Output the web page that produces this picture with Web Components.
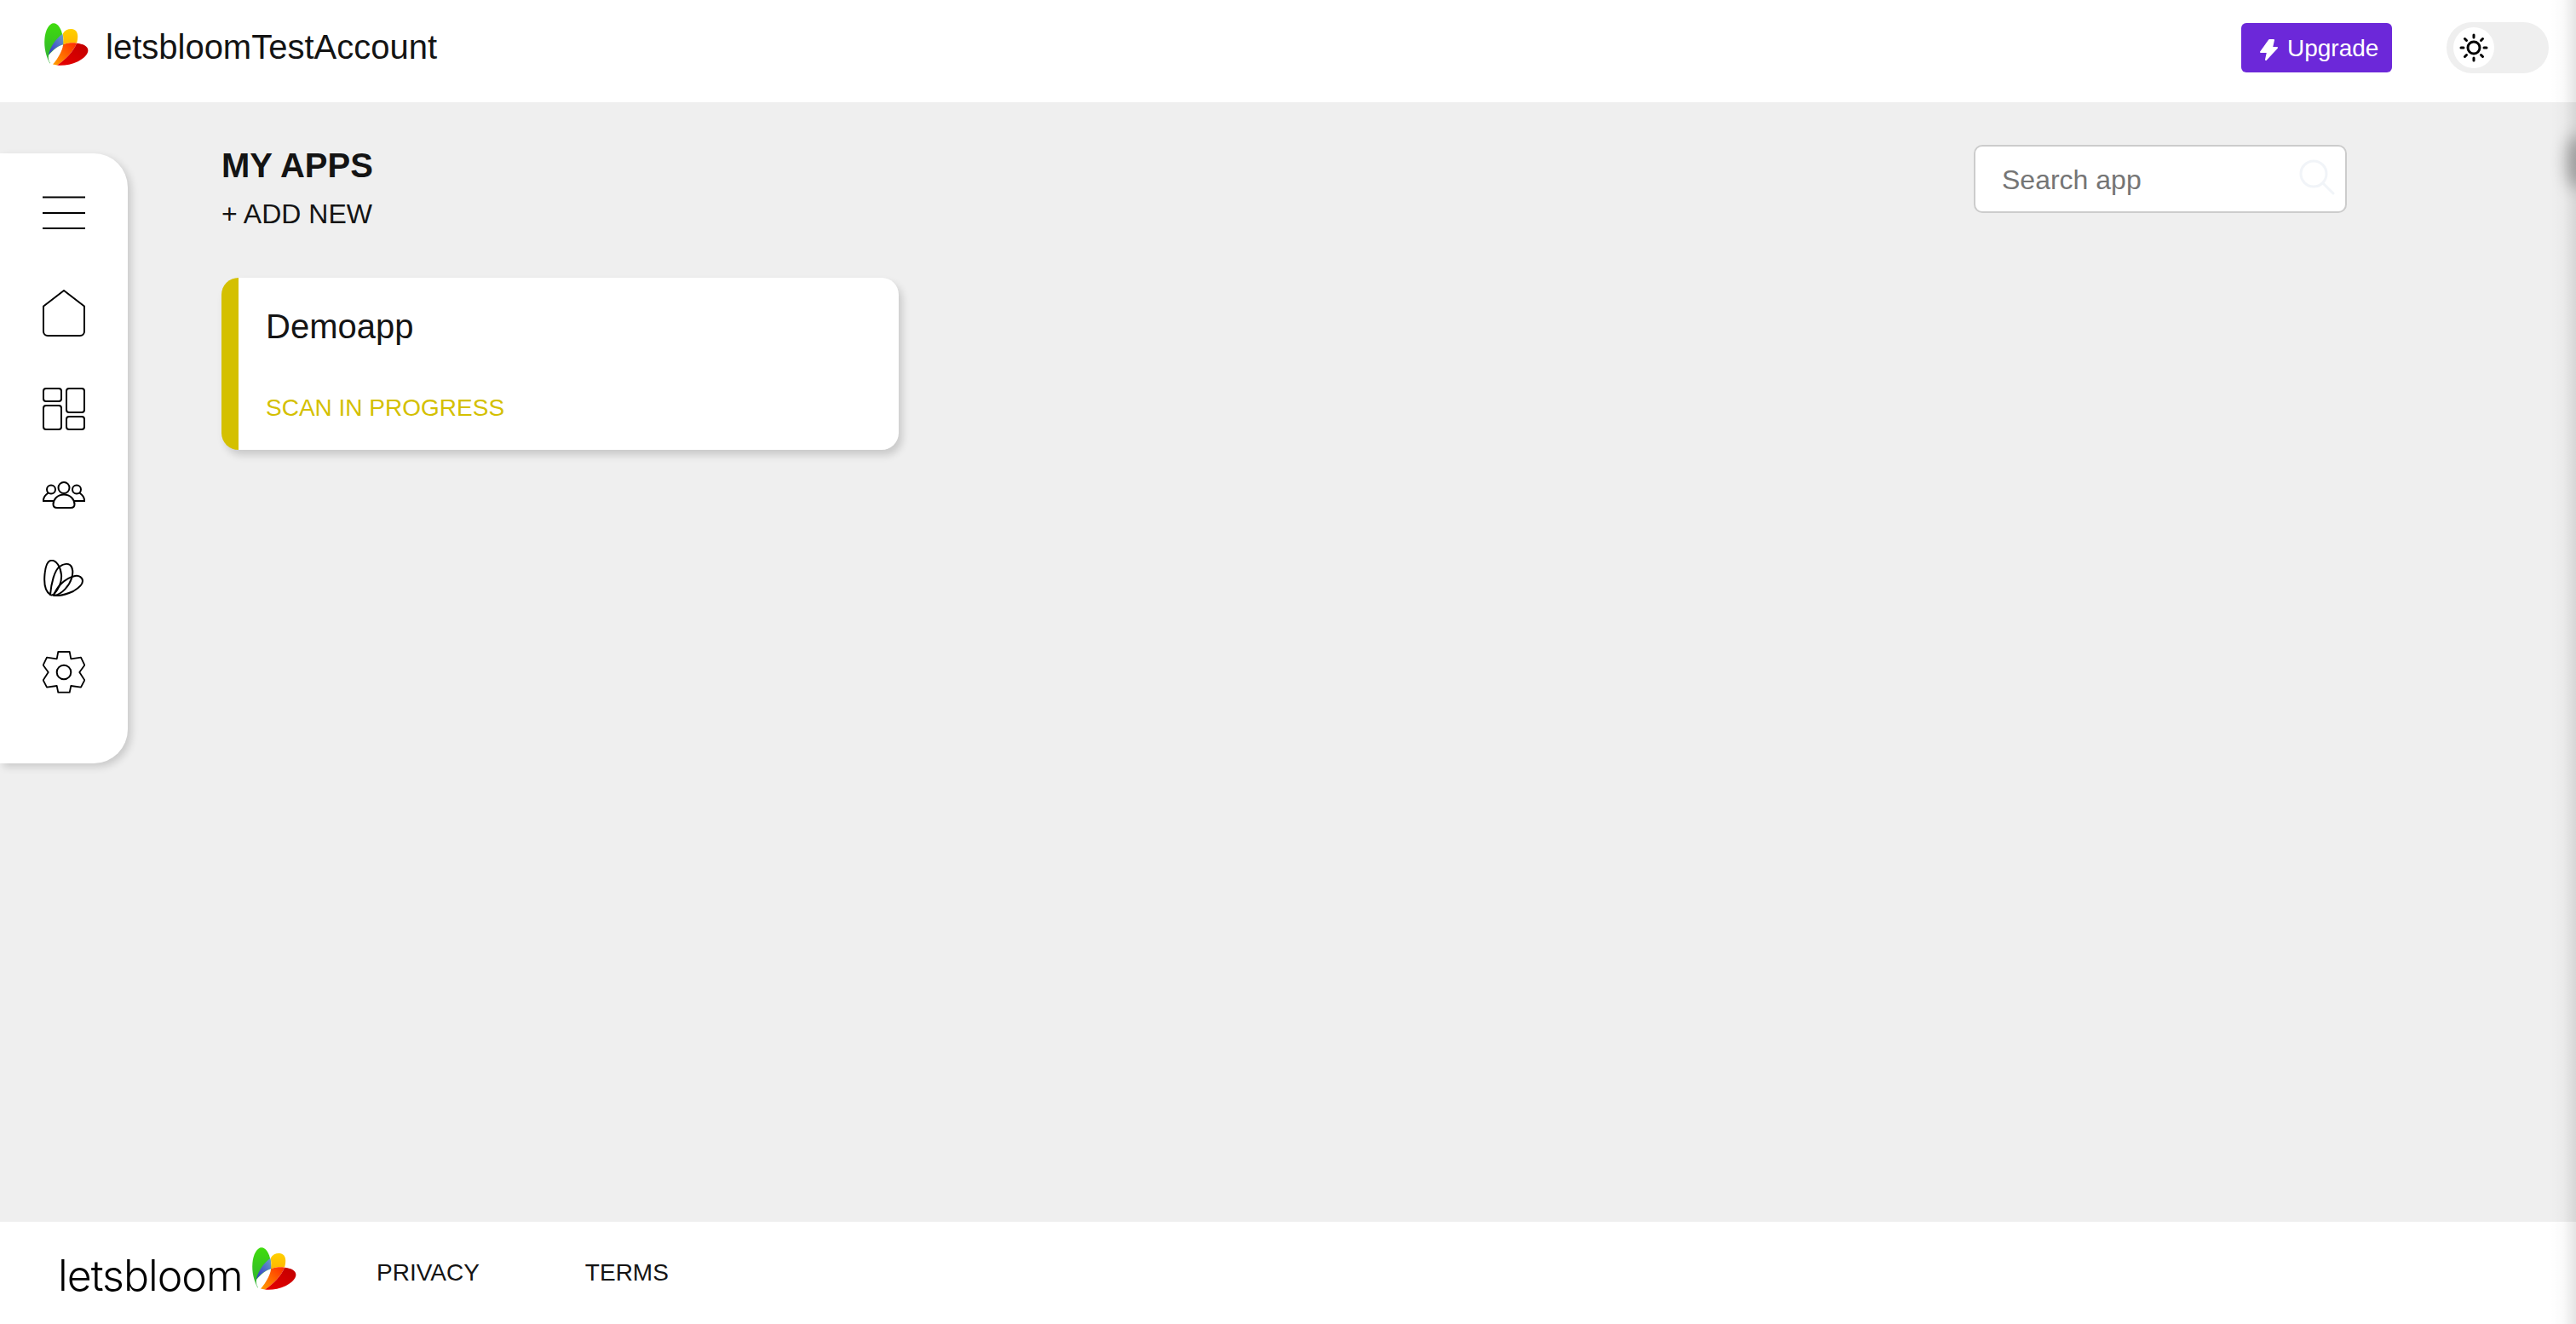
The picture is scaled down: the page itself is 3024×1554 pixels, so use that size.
<!DOCTYPE html>
<html>
<head>
<meta charset="utf-8">
<title>My apps</title>
<style>
  html, body { margin: 0; height: 100%; }
  body { font-family: "Liberation Sans", Arial, sans-serif; color: #141414; background: #efefef; overflow: hidden; }
  app-shell { height: 100vh; }
</style>
</head>
<body>
<app-shell>
  <top-bar slot="top" account="letsbloomTestAccount"></top-bar>
  <side-nav slot="side"></side-nav>
  <my-apps>
    <app-card name="Demoapp" status="SCAN IN PROGRESS"></app-card>
  </my-apps>
  <page-footer slot="bottom"></page-footer>
</app-shell>

<script>
// the petal logo is used in the header and in the footer
const templateLogo = document.createElement("template");
templateLogo.innerHTML = `
  <style>
    :host { display: block; width: 52px; height: 50px; flex: none; }
    svg { display: block; width: 100%; height: 100%; overflow: visible; }
  </style>
  <svg viewBox="0 0 52 50">
    <defs>
      <linearGradient id="g" x1="0" y1="0" x2="0" y2="1"><stop offset="0" stop-color="#3fdc0c"/><stop offset="1" stop-color="#2faf35"/></linearGradient>
      <linearGradient id="b" x1="1" y1="0" x2="0" y2="1"><stop offset="0" stop-color="#6aa2c8"/><stop offset="1" stop-color="#2f2fc8"/></linearGradient>
      <linearGradient id="y" x1="0" y1="0" x2="0" y2="1"><stop offset="0" stop-color="#ffd000"/><stop offset="1" stop-color="#ffb800"/></linearGradient>
      <linearGradient id="o" x1="1" y1="0" x2="0" y2="1"><stop offset="0" stop-color="#ff2a00"/><stop offset="1" stop-color="#ffa000"/></linearGradient>
      <linearGradient id="r" x1="1" y1="0" x2="0" y2="1"><stop offset="0" stop-color="#c00000"/><stop offset="1" stop-color="#e80000"/></linearGradient>
    </defs>
    <path fill="url(#g)" d="M6.500 47.500C2 39-.5 29 .4 18.500 1.300 8 6 .2 11 .3c5 .1 9.300 6.500 10.600 15.500L23 26 6.500 47.500z"/>
    <path fill="url(#b)" d="M21.300 12.700C13 19 7 28 5 37.500 10 31 16 27 22.300 25.300c.3-4.500-.1-8.800-1-12.600z"/>
    <path fill="#fff" d="M5 38c5.500-6.500 11-11 17.300-12.700C21 33 16 42 10 48.500 7.500 48.500 4 45 5 38z"/>
    <path fill="url(#y)" d="M21.800 12.500C24 8.500 28 6.800 32 7c4.500.2 7 3.300 7.200 8 .1 3-.3 6-1.200 8.700-5.500-.8-10.800-.2-15.700 1.600.3-4.500 0-9-.5-12.800z"/>
    <path fill="url(#o)" d="M22.300 25.300c4.900-1.800 10.200-2.400 15.700-1.600C34.500 33 25 43 15 49.500l-5-1C16 42 21 33 22.300 25.300z"/>
    <path fill="url(#r)" d="M38 23.700c7.500.7 13.300 3.300 13.400 8.300.1 4.500-5 9.800-12 13.200-8 3.800-17 5-24.400 4.300C25 43 34.500 33 38 23.700z"/>
  </svg>
`;
class BloomLogo extends HTMLElement {
  constructor() {
    super();
    this.attachShadow({ mode: "open" });
    this.shadowRoot.appendChild(templateLogo.content.cloneNode(true));
  }
}
customElements.define("bloom-logo", BloomLogo);

const templateShell = document.createElement("template");
templateShell.innerHTML = `
  <style>
    :host { display: flex; flex-direction: column; position: relative; }
    .middle { flex: 1; display: flex; min-height: 0; align-items: flex-start; }
    /* soft shadow along the right edge of the window */
    .edge { position: absolute; top: 0; bottom: 0; right: 0; width: 30px; background: linear-gradient(to right, rgba(0,0,0,0), rgba(0,0,0,.02) 50%, rgba(0,0,0,.1)); }
    .thumb { position: absolute; top: 158px; right: -14px; width: 26px; height: 64px; border-radius: 50%; background: rgba(0,0,0,.28); filter: blur(9px); }
  </style>
  <slot name="top"></slot>
  <div class="middle">
    <slot name="side"></slot>
    <slot></slot>
  </div>
  <slot name="bottom"></slot>
  <div class="edge"></div>
  <div class="thumb"></div>
`;
class AppShell extends HTMLElement {
  constructor() {
    super();
    this.attachShadow({ mode: "open" });
    this.shadowRoot.appendChild(templateShell.content.cloneNode(true));
  }
}
customElements.define("app-shell", AppShell);

const templateTopBar = document.createElement("template");
templateTopBar.innerHTML = `
  <style>
    :host { display: flex; align-items: center; height: 120px; background: #fff; padding: 0 32px 0 52px; box-sizing: border-box; flex: none; }
    bloom-logo { margin-top: -17px; }
    .name { font-size: 40px; margin-left: 20px; flex: 1; margin-top: -10px; color: #141414; }
    .upgrade { display: flex; align-items: center; width: 177px; height: 58px; box-sizing: border-box; margin-top: -8px; padding-left: 21px; background: #6c28d9; border-radius: 6px; color: #fff; font-size: 28px; }
    .upgrade span { margin-top: 2px; }
    .upgrade svg { width: 23px; height: 27px; margin-right: 10px; margin-top: 4px; }
    .toggle { display: flex; align-items: center; width: 120px; height: 60px; box-sizing: border-box; margin-left: 64px; margin-top: -8px; padding-left: 8px; background: #efefef; border-radius: 30px; }
    .knob { display: flex; align-items: center; justify-content: center; width: 48px; height: 48px; border-radius: 50%; background: #fff; }
    .knob svg { width: 34px; height: 34px; }
  </style>
  <bloom-logo></bloom-logo>
  <div class="name"></div>
  <div class="upgrade">
    <svg viewBox="0 0 23 27"><path fill="#fff" stroke="#fff" stroke-width="2" stroke-linejoin="round" d="M12 2h5l-2 9h6L8 25l2-9H2z"/></svg>
    <span>Upgrade</span>
  </div>
  <div class="toggle">
    <div class="knob">
      <svg viewBox="0 0 34 34" fill="none" stroke="#000" stroke-width="3" stroke-linecap="round">
        <circle cx="17" cy="17" r="7"/>
        <path d="M17 2v3M17 29v3M2 17h3M29 17h3M6.500 6.500l2 2M25.500 25.500l2 2M6.500 27.500l2-2M25.500 8.500l2-2"/>
      </svg>
    </div>
  </div>
`;
class TopBar extends HTMLElement {
  constructor() {
    super();
    this.attachShadow({ mode: "open" });
    this.shadowRoot.appendChild(templateTopBar.content.cloneNode(true));
    this.nameEl = this.shadowRoot.querySelector(".name");
  }
  connectedCallback() {
    this.nameEl.textContent = this.getAttribute("account");
  }
}
customElements.define("top-bar", TopBar);

const templateSideNav = document.createElement("template");
templateSideNav.innerHTML = `
  <style>
    :host { display: flex; flex-direction: column; align-items: center; flex: none; gap: 60px; width: 150px; height: 716px; box-sizing: border-box; margin-top: 60px; padding-top: 50px; background: #fff; border-radius: 0 40px 40px 0; box-shadow: 4px 4px 10px rgba(0,0,0,.16); }
    svg { display: block; width: 50px; fill: none; stroke: #000; stroke-width: 2; stroke-linejoin: round; stroke-linecap: round; }
  </style>
  <svg height="50" viewBox="0 0 50 50"><path stroke-linecap="butt" d="M0 1.500h50M0 20h50M0 38h50"/></svg>
  <svg height="55" viewBox="0 0 50 55"><path d="M1 19.500 25 1l24 18.500V49a5 5 0 0 1-5 5H6a5 5 0 0 1-5-5z"/></svg>
  <svg height="50" viewBox="0 0 50 50">
    <rect x="1" y="1" width="21" height="15" rx="3"/>
    <rect x="1" y="21" width="21" height="28" rx="3"/>
    <rect x="28" y="1" width="21" height="28" rx="3"/>
    <rect x="28" y="34" width="21" height="15" rx="3"/>
  </svg>
  <svg height="32" viewBox="0 0 50 32" stroke-width="1.600">
    <circle cx="25" cy="7.500" r="6.500"/>
    <circle cx="10" cy="9.500" r="5"/>
    <circle cx="40" cy="9.500" r="5"/>
    <path d="M17 31c-3 0-4.500-1.500-4.500-4 0-6 5-11.500 12.500-11.500S37.500 21 37.500 27c0 2.500-1.500 4-4.500 4z"/>
    <path d="M6 14C3 16 1 19 .8 23h12M44 14c3 2 5 5 5.200 9h-12"/>
  </svg>
  <svg height="43" viewBox="0 0 50 43" stroke-width="1.800">
    <path d="M9 41C3 37 1.500 27 2.500 17 3.500 6 6.500.5 11 .7c5 .2 10 7 11 17 .7 8-3 17-9 23-1.500 1-3 1-4 .3z"/>
    <path d="M9 41C10 28 14 12 20 8c4-3 9-4 12-2 4 3 4 10 2 16-3 9-11 18-20 20"/>
    <path d="M13 42c3-9 12-20 25-23 5-1 9 2 9 6 0 5-6 9-11 12-7 3-15 6-22 5z"/>
  </svg>
  <svg height="58" viewBox="0 0 50 58">
    <g transform="translate(0 4)">
      <path stroke-width="1.800" d="M18.300 1h13.400l1.600 8.300L45 7.700l4.300 9L43.300 25l6 9.300-4.300 8.400L33.300 41l-1.600 7.700H18.300L16.700 41 5 42.700.7 34.300 6.700 25 .7 16.700 5 7.700l11.700 1.600z"/>
      <circle cx="25" cy="25" r="8.300"/>
    </g>
  </svg>
`;
class SideNav extends HTMLElement {
  constructor() {
    super();
    this.attachShadow({ mode: "open" });
    this.shadowRoot.appendChild(templateSideNav.content.cloneNode(true));
  }
}
customElements.define("side-nav", SideNav);

const templateMyApps = document.createElement("template");
templateMyApps.innerHTML = `
  <style>
    :host { display: block; flex: 1; padding: 50px 0 0 110px; box-sizing: border-box; position: relative; }
    .head { display: flex; justify-content: space-between; align-items: flex-start; padding-right: 269px; height: 156px; }
    h1 { margin: 1px 0 0; font-size: 40px; line-height: 46px; font-weight: 700; color: #141414; }
    .add { font-size: 32px; line-height: 38px; margin-top: 15px; color: #141414; }
    .search { display: flex; align-items: center; justify-content: space-between; width: 438px; height: 80px; box-sizing: border-box; padding: 2px 12px 0 31px; border: 2px solid #ccc; border-radius: 10px; background: #fff; }
    .search span { font-size: 32px; color: #757575; }
    .search svg { width: 42px; height: 42px; margin-top: -6px; }
  </style>
  <div class="head">
    <div>
      <h1>MY APPS</h1>
      <div class="add">+ ADD NEW</div>
    </div>
    <div class="search">
      <span>Search app</span>
      <svg viewBox="0 0 42 42" fill="none" stroke="#f1f4f8" stroke-width="3" stroke-linecap="round"><circle cx="17" cy="17" r="15"/><path d="M28 28l12 12"/></svg>
    </div>
  </div>
  <slot></slot>
`;
class MyApps extends HTMLElement {
  constructor() {
    super();
    this.attachShadow({ mode: "open" });
    this.shadowRoot.appendChild(templateMyApps.content.cloneNode(true));
  }
}
customElements.define("my-apps", MyApps);

const templateCard = document.createElement("template");
templateCard.innerHTML = `
  <style>
    :host { display: block; width: 795px; height: 202px; box-sizing: border-box; padding: 34px 0 0 32px; background: #fff; border-left: 20px solid #d4c000; border-radius: 20px; box-shadow: 4px 6px 10px rgba(0,0,0,.16); }
    .name { font-size: 40px; line-height: 46px; color: #141414; }
    .status { margin-top: 55px; font-size: 28px; line-height: 36px; color: #d4c000; }
  </style>
  <div class="name"></div>
  <div class="status"></div>
`;
class AppCard extends HTMLElement {
  constructor() {
    super();
    this.attachShadow({ mode: "open" });
    this.shadowRoot.appendChild(templateCard.content.cloneNode(true));
  }
  connectedCallback() {
    this.shadowRoot.querySelector(".name").textContent = this.getAttribute("name");
    this.shadowRoot.querySelector(".status").textContent = this.getAttribute("status");
  }
}
customElements.define("app-card", AppCard);

const templateFooter = document.createElement("template");
templateFooter.innerHTML = `
  <style>
    :host { display: flex; align-items: center; height: 120px; flex: none; box-sizing: border-box; padding-left: 68px; background: #fff; }
    .word { font-family: Inter, "Liberation Sans", sans-serif; font-weight: 300; font-size: 50px; letter-spacing: -1px; color: #000; width: 228px; margin-top: 5px; }
    bloom-logo { margin-top: -10px; }
    nav { display: flex; gap: 124px; margin-left: 94px; font-size: 28px; color: #141414; }
  </style>
  <span class="word">letsbloom</span>
  <bloom-logo></bloom-logo>
  <nav><span>PRIVACY</span><span>TERMS</span></nav>
`;
class PageFooter extends HTMLElement {
  constructor() {
    super();
    this.attachShadow({ mode: "open" });
    this.shadowRoot.appendChild(templateFooter.content.cloneNode(true));
  }
}
customElements.define("page-footer", PageFooter);
</script>
</body>
</html>
